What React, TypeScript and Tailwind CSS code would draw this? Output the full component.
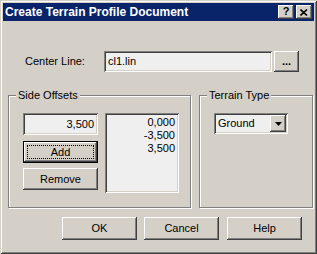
import React from "react";

const raised =
  "shadow-[inset_-1px_-1px_#404040,inset_1px_1px_#ffffff,inset_-2px_-2px_#808080,inset_2px_2px_#d4d0c8]";
const sunken =
  "shadow-[inset_1px_1px_#808080,inset_-1px_-1px_#ffffff,inset_2px_2px_#404040,inset_-2px_-2px_#d4d0c8]";

function Btn({ label, className = "" }: { label: string; className?: string }) {
  return (
    <div className={`bg-[#d4d0c8] flex items-center justify-center ${raised} ${className}`}>
      {label}
    </div>
  );
}

function Group({ label, className = "", children }: { label: string; className?: string; children?: React.ReactNode }) {
  return (
    <div
      className={`relative border border-[#808080] shadow-[inset_1px_1px_#ffffff,1px_1px_#ffffff] ${className}`}
    >
      {/* legend over the etched line */}
      <span className="absolute left-[7px] -top-[8px] bg-[#d4d0c8] px-[2px] leading-[14px]">{label}</span>
      {children}
    </div>
  );
}

export default function App() {
  return (
    <div className="w-[317px] h-[254px] bg-[#d4d0c8] p-[3px] flex flex-col text-[11px] text-black font-['Liberation_Sans',Arial,sans-serif] shadow-[inset_1px_1px_#d4d0c8,inset_-1px_-1px_#404040,inset_2px_2px_#ffffff,inset_-2px_-2px_#808080]">
      {/* title bar */}
      <div className="h-[18px] bg-[#0a246a] flex items-center justify-between pl-[2px] pr-[2px]">
        <span className="text-white font-bold text-[12px] leading-none">Create Terrain Profile Document</span>
        <div className="flex gap-[2px]">
          <div className={`w-[16px] h-[14px] bg-[#d4d0c8] ${raised} flex items-center justify-center font-bold text-[11px] leading-none pb-[1px]`}>
            ?
          </div>
          <div className={`w-[16px] h-[14px] bg-[#d4d0c8] ${raised} flex items-center justify-center`}>
            <svg width="8" height="7" viewBox="0 0 8 7">
              <path d="M0.5 0.5 L7 6.5 M7 0.5 L0.5 6.5" stroke="#000" strokeWidth="1.6" />
            </svg>
          </div>
        </div>
      </div>

      {/* body */}
      <div className="flex-1 flex flex-col">
        <div className="flex items-center mt-[30px] pl-[22px]">
          <span className="w-[79px]">Center Line:</span>
          <div className={`w-[168px] h-[21px] bg-[#efefef] ${sunken} flex items-center pl-[4px]`}>cl1.lin</div>
          <div className={`w-[25px] h-[21px] ml-[2px] bg-[#d4d0c8] ${raised} flex items-end justify-center pb-[5px] font-bold leading-none`}>
            ...
          </div>
        </div>

        <div className="flex gap-[8px] mt-[23px] pl-[5px]">
          <Group label="Side Offsets" className="w-[183px] h-[113px] flex gap-[7px] pl-[14px] pt-[17px]">
            <div className="flex flex-col w-[75px]">
              <div className={`h-[22px] bg-[#efefef] ${sunken} flex items-center justify-end pr-[4px]`}>3,500</div>
              <div className="mt-[6px] h-[22px] border border-black">
                <div className={`h-full bg-[#d4d0c8] ${raised} p-[3px]`}>
                  <div className="h-full border border-dotted border-black flex items-center justify-center">Add</div>
                </div>
              </div>
              <Btn label="Remove" className="mt-[5px] h-[22px]" />
            </div>
            <div className={`w-[74px] h-[80px] bg-[#efefef] ${sunken} flex flex-col items-end pr-[4px] pt-[3px] leading-[13px]`}>
              <span>0,000</span>
              <span>-3,500</span>
              <span>3,500</span>
            </div>
          </Group>

          <Group label="Terrain Type" className="w-[114px] h-[113px] pl-[14px] pt-[17px]">
            <div className={`w-[74px] h-[21px] bg-[#efefef] ${sunken} flex items-center justify-between pl-[4px] pr-[2px]`}>
              <span>Ground</span>
              <div className={`w-[16px] h-[17px] bg-[#d4d0c8] ${raised} flex items-center justify-center`}>
                <svg width="7" height="4" viewBox="0 0 7 4">
                  <path d="M0 0 H7 L3.5 4 Z" fill="#000" />
                </svg>
              </div>
            </div>
          </Group>
        </div>

        <div className="flex mt-[9px] pl-[59px]">
          <Btn label="OK" className="w-[75px] h-[23px]" />
          <Btn label="Cancel" className="w-[75px] h-[23px] ml-[7px]" />
          <Btn label="Help" className="w-[75px] h-[23px] ml-[8px]" />
        </div>
      </div>
    </div>
  );
}
